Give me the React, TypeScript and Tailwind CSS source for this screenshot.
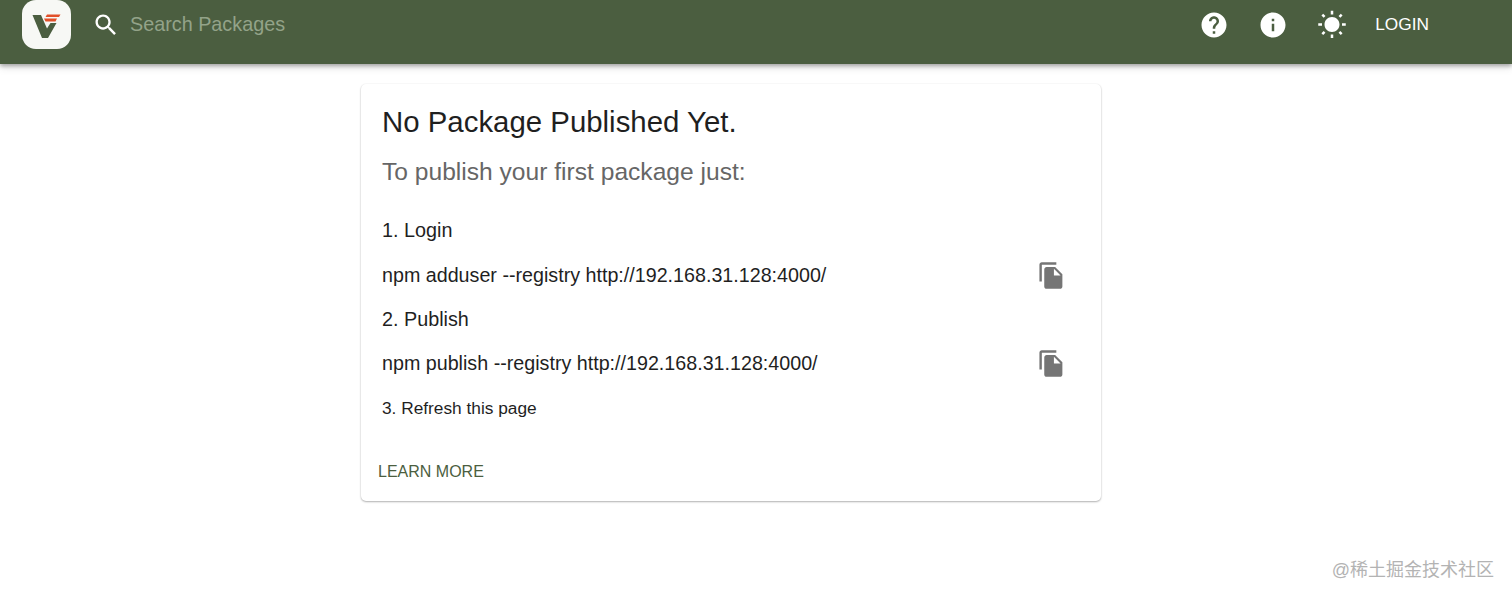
import React from 'react';

const ICONS = {
  search: 'M15.5 14h-.79l-.28-.27C15.41 12.59 16 11.11 16 9.5 16 5.91 13.09 3 9.5 3S3 5.91 3 9.5 5.91 16 9.5 16c1.61 0 3.09-.59 4.23-1.57l.27.28v.79l5 4.99L20.49 19l-4.99-5zm-6 0C7.01 14 5 11.99 5 9.5S7.01 5 9.5 5 14 7.01 14 9.5 11.99 14 9.5 14z',
  help: 'M12 2C6.48 2 2 6.48 2 12s4.48 10 10 10 10-4.48 10-10S17.52 2 12 2zm1 17h-2v-2h2v2zm2.07-7.75l-.9.92C13.45 12.9 13 13.5 13 15h-2v-.5c0-1.1.45-2.1 1.17-2.83l1.24-1.26c.37-.36.59-.86.59-1.41 0-1.1-.9-2-2-2s-2 .9-2 2H8c0-2.21 1.79-4 4-4s4 1.79 4 4c0 .88-.36 1.68-.93 2.25z',
  info: 'M12 2C6.48 2 2 6.48 2 12s4.48 10 10 10 10-4.48 10-10S17.52 2 12 2zm1 15h-2v-6h2v6zm0-8h-2V7h2v2z',
  sun: 'M6.76 4.84l-1.8-1.79-1.41 1.41 1.79 1.79 1.42-1.41zM4 10.5H1v2h3v-2zm9-9.95h-2V3.5h2V.55zm7.45 3.91l-1.41-1.41-1.79 1.79 1.41 1.41 1.79-1.79zm-3.21 13.7l1.79 1.8 1.41-1.41-1.8-1.79-1.4 1.4zM20 10.5v2h3v-2h-3zm-8-5c-3.31 0-6 2.69-6 6s2.69 6 6 6 6-2.69 6-6-2.69-6-6-6zm-1 16.95h2V19.5h-2v2.95zm-7.45-3.91l1.41 1.41 1.79-1.8-1.41-1.41-1.79 1.8z',
  copy: 'M16 1H4c-1.1 0-2 .9-2 2v14h2V3h12V1zm-1 4l6 6v10c0 1.1-.9 2-2 2H7.99C6.89 23 6 22.1 6 21l.01-14c0-1.1.89-2 1.99-2h7zm-1 7h5.5L14 6.5V12z',
};

function Icon({ d, className }: { d: string; className: string }) {
  return (
    <svg viewBox="0 0 24 24" fill="currentColor" className={className}>
      <path d={d} />
    </svg>
  );
}

function Logo() {
  return (
    <div className="h-[49px] w-[49px] rounded-[14px] bg-[#f7f8f5]">
      <svg viewBox="0 0 49 49" className="h-[49px] w-[49px]">
        <path d="M10.5 15h8.5l6 13.5 3.5-5.5h6l-8.5 15h-6z" fill="#4b5e40" />
        <path d="M25 14.5h13.5l-1.5 2.6H23.5z M22 18.5h13l-1.5 3H23.5z" fill="#e2502a" />
      </svg>
    </div>
  );
}

function Command({ text }: { text: string }) {
  return (
    <div className="flex h-[45px] items-center justify-between pr-[15px]">
      <span className="text-[19.7px] leading-none">{text}</span>
      <Icon d={ICONS.copy} className="h-[29px] w-[29px] text-[#757575]" />
    </div>
  );
}

export default function App() {
  return (
    <div className="relative h-[597px] overflow-hidden bg-white font-['Liberation_Sans',sans-serif] text-[#1f1f1f]">
      <header className="flex h-16 items-start bg-[#4b5e40] pl-[22px] pr-[83px] text-white shadow-[0_2px_4px_rgba(0,0,0,0.3),0_4px_8px_rgba(0,0,0,0.1)]">
        <Logo />
        <div className="ml-[21px] flex h-[49px] items-center">
          <Icon d={ICONS.search} className="h-[28px] w-[28px]" />
          <span className="ml-[10px] text-[19.8px] text-[#93a389]">Search Packages</span>
        </div>
        <div className="ml-auto flex h-[49px] items-center">
          <Icon d={ICONS.help} className="h-[30px] w-[30px]" />
          <Icon d={ICONS.info} className="ml-[29px] h-[30px] w-[30px]" />
          <Icon d={ICONS.sun} className="ml-[29px] h-[30px] w-[30px]" />
          <span className="ml-[28px] text-[17.3px]">LOGIN</span>
        </div>
      </header>

      <main className="flex justify-center pr-[50px] pt-[20px]">
        <div className="h-[417px] w-[740px] rounded-[5px] bg-white pl-[21px] pr-[20px] pt-[18px] shadow-[0_1px_2px_rgba(0,0,0,0.3),0_0_2px_rgba(0,0,0,0.06)]">
          <h1 className="text-[29.4px] leading-[40px]">No Package Published Yet.</h1>
          <h2 className="mt-[15px] text-[24.6px] leading-[30px] text-[#666666]">To publish your first package just:</h2>
          <div className="mt-[21px] flex h-[45px] items-center text-[19.8px]">1. Login</div>
          <Command text="npm adduser --registry http://192.168.31.128:4000/" />
          <div className="flex h-[43px] items-center text-[19.8px]">2. Publish</div>
          <Command text="npm publish --registry http://192.168.31.128:4000/" />
          <div className="flex h-[46px] items-center text-[17.3px]">3. Refresh this page</div>
          <div className="-ml-[4px] mt-[28px] text-[16px] text-[#4b5e40]">LEARN MORE</div>
        </div>
      </main>

      <div className="absolute bottom-[18px] right-[18px] font-['Liberation_Sans','Noto_Sans_CJK_SC',sans-serif] text-[18px] leading-none text-[#b3b3b3]">@稀土掘金技术社区</div>
    </div>
  );
}
